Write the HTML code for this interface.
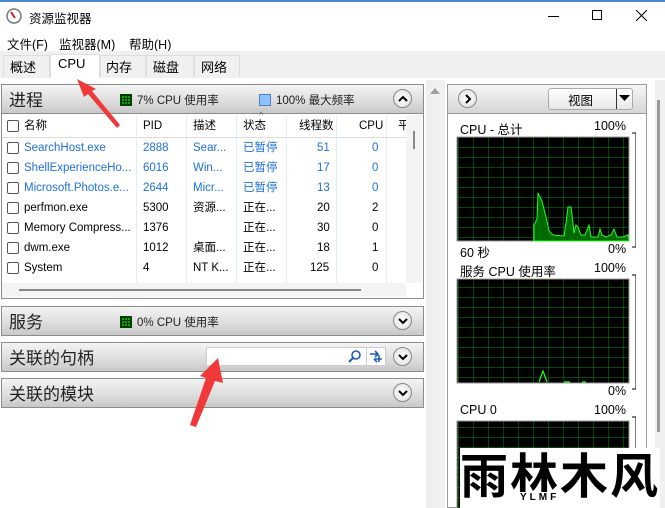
<!DOCTYPE html><html><head><meta charset="utf-8"><style>
*{box-sizing:border-box;margin:0;padding:0}
body{width:665px;height:508px;overflow:hidden;background:#fff;font-family:"Liberation Sans","Noto Sans CJK SC",sans-serif;font-size:12px;color:#000;position:relative}
.a{position:absolute}
.hdr{position:absolute;left:1px;width:423px;height:30px;background:linear-gradient(#f4f4f4,#dcdcdc 60%,#c8c8c8);border:1px solid #8c8c8c}
.hdr .t{position:absolute;left:7px;top:1px;font-size:17px;color:#222}
.circ{position:absolute;width:19px;height:19px;border-radius:50%;border:1px solid #888;background:radial-gradient(#fff,#ddd);}
.circ svg{position:absolute;left:4px;top:4px}
.sq{display:inline-block;width:12px;height:12px;vertical-align:-2px;margin-right:5px}
.row{position:absolute;left:5px;height:20px;font-size:11.5px;line-height:20px;white-space:nowrap}
.cb{position:absolute;left:2px;top:4px;width:12px;height:12px;border:1px solid #555;border-radius:2px;background:#fff}
.b{color:#1e6fd9}
.c{position:absolute}
.vl{position:absolute;top:115px;height:168px;width:1px;background:#e3ecf7}
</style></head><body>
<div class="a" style="left:0;top:0;width:665px;height:2px;background:#4a86d0"></div>
<svg class="a" style="left:6px;top:8px" width="16" height="16"><circle cx="8" cy="8" r="7" fill="#fff" stroke="#777" stroke-width="1.5"/><line x1="5" y1="4" x2="9" y2="10" stroke="#c00" stroke-width="1.6"/></svg>
<div class="a" style="left:29px;top:8px;font-size:12.5px">资源监视器</div>
<div class="a" style="left:548px;top:16px;width:11px;height:1px;background:#000"></div>
<div class="a" style="left:592px;top:10px;width:10px;height:10px;border:1px solid #000"></div>
<svg class="a" style="left:636px;top:10px" width="11" height="11"><path d="M0 0L11 11M11 0L0 11" stroke="#000" stroke-width="1"/></svg>
<div class="a" style="left:7px;top:34px;font-size:12.5px">文件(F)</div>
<div class="a" style="left:59px;top:34px;font-size:12.5px">监视器(M)</div>
<div class="a" style="left:129px;top:34px;font-size:12.5px">帮助(H)</div>
<div class="a" style="left:0;top:51px;width:665px;height:30px;background:#f0f0f0"></div>
<div class="a" style="left:3px;top:55px;width:47px;height:22px;border:1px solid #ddd;border-bottom:none;background:#f0f0f0;font-size:13px;padding:1px 6px">概述</div>
<div class="a" style="left:50px;top:54px;width:50px;height:25px;border:1px solid #ddd;border-bottom:none;background:#fff;font-size:13px;padding:1px 7px">CPU</div>
<div class="a" style="left:100px;top:55px;width:46px;height:22px;border:1px solid #ddd;border-bottom:none;font-size:13px;padding:1px 5px">内存</div>
<div class="a" style="left:146px;top:55px;width:48px;height:22px;border:1px solid #ddd;border-bottom:none;font-size:13px;padding:1px 6px">磁盘</div>
<div class="a" style="left:194px;top:55px;width:46px;height:22px;border:1px solid #ddd;border-bottom:none;font-size:13px;padding:1px 6px">网络</div>
<div class="a" style="left:0;top:78px;width:665px;height:430px;background:#fff"></div>
<div class="a" style="left:1px;top:84px;width:423px;height:215px;border:1px solid #8c8c8c;background:#fff"></div>
<div class="hdr" style="top:84px"><span class="t">进程</span>
<div class="a" style="left:118px;top:7px;font-size:11.5px;color:#222"><span class="sq" style="background:#0a0;border:1px solid #040;background-image:repeating-linear-gradient(90deg,#030 0 1px,transparent 1px 3px),repeating-linear-gradient(0deg,#030 0 1px,transparent 1px 3px)"></span>7% CPU 使用率</div>
<div class="a" style="left:257px;top:7px;font-size:11.5px;color:#222"><span class="sq" style="background:#8cc0ff;border:1px solid #5080c0"></span>100% 最大频率</div>
<div class="circ" style="left:391px;top:4px"><svg width="10" height="10"><path d="M1 7L5 3L9 7" fill="none" stroke="#000" stroke-width="2"/></svg></div></div>
<div class="a" style="left:2px;top:115px;width:408px;height:23px;border-bottom:1px solid #ddd"></div>
<div class="vl" style="left:136px"></div><div class="vl" style="left:186px"></div><div class="vl" style="left:236px"></div><div class="vl" style="left:286px"></div><div class="vl" style="left:336px"></div><div class="vl" style="left:386px"></div>
<div class="row" style="top:116px"><span class="cb"></span><span class="c" style="left:19px">名称</span><span class="c" style="left:138px">PID</span><span class="c" style="left:188px">描述</span><span class="c" style="left:238px">状态</span><span class="c" style="left:294px">线程数</span><span class="c" style="left:354px">CPU</span><span class="c" style="left:393px">平</span></div>
<div class="a" style="left:259px;top:110px;font-size:9px;color:#666">^</div>
<div class="row b" style="top:138px"><span class="cb"></span><span class="c" style="left:19px">SearchHost.exe</span><span class="c" style="left:138px">2888</span><span class="c" style="left:188px">Sear...</span><span class="c" style="left:238px">已暂停</span><span class="c" style="left:312px">51</span><span class="c" style="left:367px">0</span></div>
<div class="row b" style="top:158px"><span class="cb"></span><span class="c" style="left:19px">ShellExperienceHo...</span><span class="c" style="left:138px">6016</span><span class="c" style="left:188px">Win...</span><span class="c" style="left:238px">已暂停</span><span class="c" style="left:312px">17</span><span class="c" style="left:367px">0</span></div>
<div class="row b" style="top:178px"><span class="cb"></span><span class="c" style="left:19px">Microsoft.Photos.e...</span><span class="c" style="left:138px">2644</span><span class="c" style="left:188px">Micr...</span><span class="c" style="left:238px">已暂停</span><span class="c" style="left:312px">13</span><span class="c" style="left:367px">0</span></div>
<div class="row" style="top:198px"><span class="cb"></span><span class="c" style="left:19px">perfmon.exe</span><span class="c" style="left:138px">5300</span><span class="c" style="left:188px">资源...</span><span class="c" style="left:238px">正在...</span><span class="c" style="left:312px">20</span><span class="c" style="left:367px">2</span></div>
<div class="row" style="top:218px"><span class="cb"></span><span class="c" style="left:19px">Memory Compress...</span><span class="c" style="left:138px">1376</span><span class="c" style="left:238px">正在...</span><span class="c" style="left:312px">30</span><span class="c" style="left:367px">0</span></div>
<div class="row" style="top:238px"><span class="cb"></span><span class="c" style="left:19px">dwm.exe</span><span class="c" style="left:138px">1012</span><span class="c" style="left:188px">桌面...</span><span class="c" style="left:238px">正在...</span><span class="c" style="left:312px">18</span><span class="c" style="left:367px">1</span></div>
<div class="row" style="top:258px"><span class="cb"></span><span class="c" style="left:19px">System</span><span class="c" style="left:138px">4</span><span class="c" style="left:188px">NT K...</span><span class="c" style="left:238px">正在...</span><span class="c" style="left:305px">125</span><span class="c" style="left:367px">0</span></div>
<div class="a" style="left:406px;top:115px;width:16px;height:168px;background:#f4f4f4"></div>
<div class="a" style="left:413px;top:131px;width:2px;height:18px;background:#888"></div>
<div class="a" style="left:2px;top:283px;width:404px;height:14px;background:#f4f4f4"></div>
<div class="a" style="left:19px;top:289px;width:342px;height:2px;background:#888"></div>
<div class="hdr" style="top:306px"><span class="t">服务</span>
<div class="a" style="left:118px;top:7px;font-size:11.5px;color:#222"><span class="sq" style="background:#0a0;border:1px solid #040;background-image:repeating-linear-gradient(90deg,#030 0 1px,transparent 1px 3px),repeating-linear-gradient(0deg,#030 0 1px,transparent 1px 3px)"></span>0% CPU 使用率</div>
<div class="circ" style="left:391px;top:4px"><svg width="10" height="10"><path d="M1 3L5 7L9 3" fill="none" stroke="#000" stroke-width="2"/></svg></div></div>
<div class="hdr" style="top:342px"><span class="t">关联的句柄</span>
<div class="a" style="left:204px;top:4px;width:180px;height:19px;background:#fff;border:1px solid #ccc"></div>
<svg class="a" style="left:346px;top:7px" width="14" height="14"><circle cx="8" cy="5" r="4" fill="none" stroke="#1e5fb0" stroke-width="1.6"/><path d="M5 8L1 12" stroke="#1e5fb0" stroke-width="2"/></svg>
<div class="a" style="left:364px;top:4px;width:1px;height:19px;background:#ccc"></div>
<svg class="a" style="left:367px;top:6px" width="15" height="15"><path d="M1 5H9M6 2L9 5L6 8" fill="none" stroke="#1e5fb0" stroke-width="1.6"/><path d="M13 10H5M8 13L5 10" fill="none" stroke="#1e5fb0" stroke-width="1.6"/><path d="M10 6V13" stroke="#1e5fb0" stroke-width="1.6"/></svg>
<div class="circ" style="left:391px;top:4px"><svg width="10" height="10"><path d="M1 3L5 7L9 3" fill="none" stroke="#000" stroke-width="2"/></svg></div></div>
<div class="hdr" style="top:378px"><span class="t">关联的模块</span>
<div class="circ" style="left:391px;top:4px"><svg width="10" height="10"><path d="M1 3L5 7L9 3" fill="none" stroke="#000" stroke-width="2"/></svg></div></div>
<div class="a" style="left:426px;top:80px;width:19px;height:428px;background:#f0f0f0"></div>
<svg class="a" style="left:430px;top:87px" width="10" height="7"><path d="M0 7L5 1L10 7Z" fill="#a0a0a0"/></svg>
<div class="a" style="left:447px;top:84px;width:200px;height:424px;border:1px solid #999;background:#fff"></div>
<div class="a" style="left:448px;top:85px;width:198px;height:29px;background:linear-gradient(#f6f6f6,#d6d6d6);border-bottom:1px solid #999"></div>
<div class="circ" style="left:458px;top:89px"><svg width="10" height="10"><path d="M3 1L7 5L3 9" fill="none" stroke="#000" stroke-width="2"/></svg></div>
<div class="a" style="left:548px;top:88px;width:85px;height:22px;border:1px solid #aaa;border-radius:3px;background:linear-gradient(#fff,#e8e8e8)"></div>
<div class="a" style="left:568px;top:90px;font-size:12.5px">视图</div>
<div class="a" style="left:616px;top:89px;width:1px;height:20px;background:#333"></div>
<svg class="a" style="left:619px;top:95px" width="11" height="7"><path d="M0 0H11L5.5 6Z" fill="#000"/></svg>
<div class="a" style="left:460px;top:119px;font-size:12.5px">CPU - 总计</div><div class="a" style="left:594px;top:119px;font-size:12.5px">100%</div>
<div class="a" style="left:460px;top:242px;font-size:12.5px">60 秒</div><div class="a" style="left:608px;top:242px;font-size:12.5px">0%</div>
<div class="a" style="left:460px;top:261px;font-size:12.5px">服务 CPU 使用率</div><div class="a" style="left:594px;top:261px;font-size:12.5px">100%</div>
<div class="a" style="left:608px;top:384px;font-size:12.5px">0%</div>
<div class="a" style="left:460px;top:403px;font-size:12.5px">CPU 0</div><div class="a" style="left:594px;top:403px;font-size:12.5px">100%</div>
<svg class="a" style="left:456px;top:125px" width="180" height="383">
<defs><pattern id="g" x="2" y="2" width="15" height="10" patternUnits="userSpaceOnUse"><rect width="15" height="10" fill="#000"/><path d="M0 0V10M0 0H15" stroke="#0a8a0a" stroke-width="1"/></pattern></defs>
<path d="M176 8H180V122H176M176 150H180V264H176M176 292H180V383" fill="none" stroke="#000"/>
<rect x="1" y="12" width="172" height="104" fill="url(#g)" stroke="#999"/>
<path d="M78 116L78 100L81 94L82 68L86 76L91 96L93 106L97 110L108 111L110 98L112 82L115 82L117 98L118 108L120 100L122 102L125 110L129 110L133 100L135 112L142 112L144 104L146 110L150 112L155 110L158 104L161 112L167 112L172 110L173 116Z" fill="#006a00" stroke="#2f2" stroke-width="1"/>
<rect x="1" y="154" width="172" height="104" fill="url(#g)" stroke="#999"/>
<path d="M83 257L87 246L91 257M108 257H114M126 257H130" fill="none" stroke="#2f2" stroke-width="1.2"/>
<rect x="1" y="296" width="172" height="90" fill="url(#g)" stroke="#999"/>
</svg>
<div class="a" style="left:655px;top:80px;width:10px;height:428px;background:#f0f0f0"></div>
<div class="a" style="left:657px;top:100px;width:3px;height:332px;background:#999"></div>
<div class="a" style="left:460px;top:448px;width:200px;height:60px;background:#fff;overflow:hidden">
<div class="a" style="left:0;top:-6px;font-size:48px;font-weight:bold;white-space:nowrap;font-family:'Noto Sans CJK SC',sans-serif;line-height:60px;letter-spacing:2px">雨林木风</div>
<div class="a" style="left:58px;top:44px;font-size:10px;font-weight:bold;letter-spacing:3px;background:#fff;padding:0 2px">YLMF</div>
</div>
<svg class="a" style="left:0;top:0" width="665" height="508"><path d="M117 128L88 94L84 97L77 79L96 89L92 91L120 125Z" fill="#f03a3a"/><path d="M190 425L206 378L200 376L218 358L223 383L215 381L196 427Z" fill="#f03a3a"/></svg>
</body></html>
